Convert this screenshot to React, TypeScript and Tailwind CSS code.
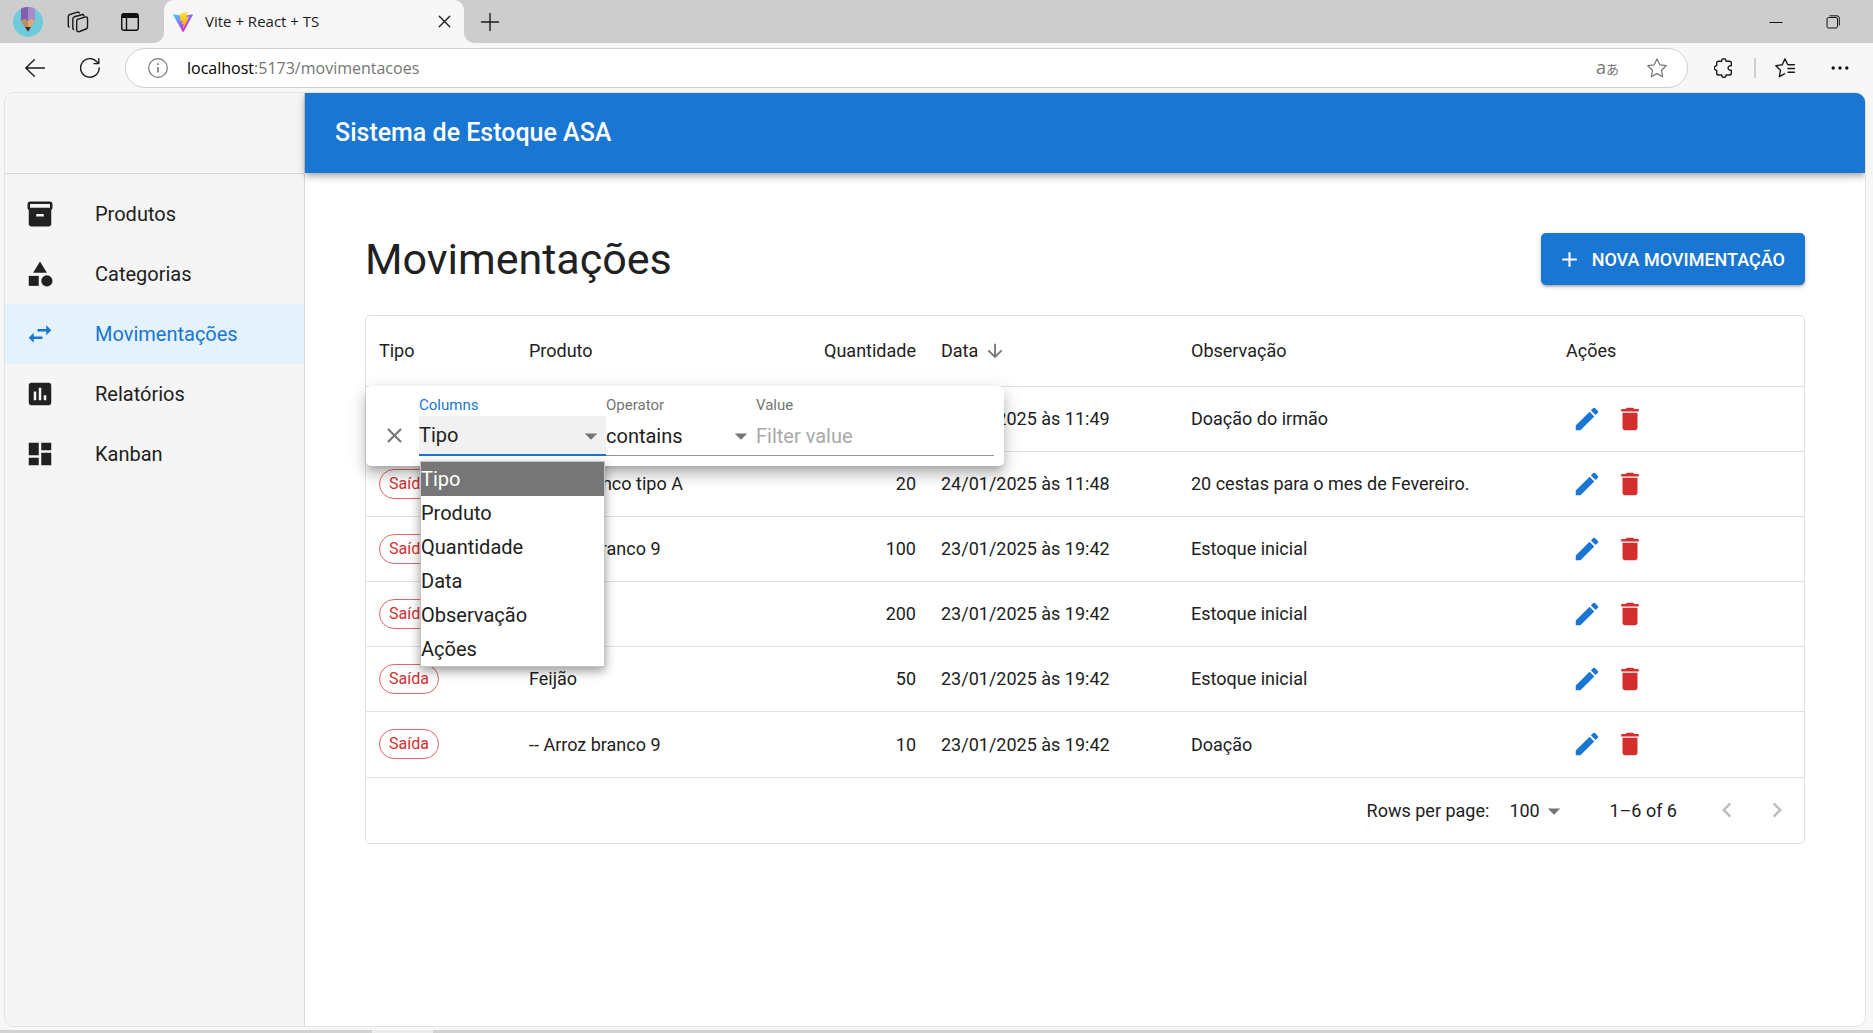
import React, { useState } from "react";
import {
  MdAdd,
  MdArrowDownward,
  MdArrowDropDown,
  MdAssessment,
  MdCategory,
  MdClose,
  MdDashboard,
  MdDelete,
  MdEdit,
  MdInventory2,
  MdKeyboardArrowLeft,
  MdKeyboardArrowRight,
  MdSwapHoriz,
} from "react-icons/md";

const navItems = [
  { label: "Produtos", Icon: MdInventory2 },
  { label: "Categorias", Icon: MdCategory },
  { label: "Movimentações", Icon: MdSwapHoriz, active: true },
  { label: "Relatórios", Icon: MdAssessment },
  { label: "Kanban", Icon: MdDashboard },
];

const columns = ["Tipo", "Produto", "Quantidade", "Data", "Observação", "Ações"];

const headerCellClasses = ["px-[13px]", "px-[13px]", "px-[13px] text-right", "px-3", "px-3", "px-3"];

const rows = [
  { produto: "Feijão", quantidade: 20, data: "24/01/2025 às 11:49", obs: "Doação do irmão" },
  { produto: "Arroz branco tipo A", quantidade: 20, data: "24/01/2025 às 11:48", obs: "20 cestas para o mes de Fevereiro." },
  { produto: "-- Arroz branco 9", quantidade: 100, data: "23/01/2025 às 19:42", obs: "Estoque inicial" },
  { produto: "Feijão", quantidade: 200, data: "23/01/2025 às 19:42", obs: "Estoque inicial" },
  { produto: "Feijão", quantidade: 50, data: "23/01/2025 às 19:42", obs: "Estoque inicial" },
  { produto: "-- Arroz branco 9", quantidade: 10, data: "23/01/2025 às 19:42", obs: "Doação" },
];

function ProfileIcon() {
  return (
    <svg width="30" height="30" viewBox="0 0 30 30" aria-hidden="true">
      <circle cx="15" cy="15" r="15" fill="#6fcbdb" />
      <path d="M8 1.7A15 15 0 0 1 22 1.7V15H8z" fill="#a78bc9" />
      <path d="M8 1.7A15 15 0 0 1 15 0V15H8z" fill="#7f5fae" />
      <path d="M8 14l3.5-2 3.5 2 3.5-2 3.5 2-4.500 7h-5z" fill="#dba878" />
      <path d="M8 14l3.500-2 3.500 2v7h-2.500z" fill="#c08a5c" />
      <path d="M12 20h6l-3 4.800z" fill="#333" />
    </svg>
  );
}

function WorkspacesIcon() {
  return (
    <svg width="24" height="24" viewBox="0 0 24 24" fill="none" stroke="#1b1b1b" strokeWidth="1.400" strokeLinejoin="round" strokeLinecap="round" aria-hidden="true">
      <path d="M11.500 9.300l7.500-2.300q2.500-.6 2.500 1.800v8.200q0 1.500-1.500 2l-6.500 2.500q-2.800.8-2.800-1.800v-8.500q0-1.400.8-1.900z" />
      <path d="M6.800 18.500V8.800q0-1.500 1.500-2L16.800 4.500M6.800 18.500q0 .8.800 1" />
      <path d="M2.300 16V6.500q0-1.500 1.500-2L11.500 2.200q1.500-.3 1.800.8M2.300 16q0 .8.800 1" />
      <path d="M16.800 4.500q.8.100 1 1" />
    </svg>
  );
}

function TabActionsIcon() {
  return (
    <svg width="20" height="20" viewBox="0 0 20 20" aria-hidden="true">
      <rect x="1.700" y="1.700" width="16.600" height="16.600" rx="2.600" fill="none" stroke="#111" strokeWidth="1.400" />
      <path d="M1.500 6V4q0-3 3-3h11q3 0 3 3v2z" fill="#111" />
      <path d="M6.500 6v12" stroke="#111" strokeWidth="1.400" />
    </svg>
  );
}

function ViteIcon() {
  return (
    <svg width="20" height="20" viewBox="0 0 256 257" aria-hidden="true">
      <defs>
        <linearGradient id="viteBody" x1="-.828%" x2="57.636%" y1="7.652%" y2="78.411%">
          <stop offset="0%" stopColor="#41D1FF" />
          <stop offset="100%" stopColor="#BD34FE" />
        </linearGradient>
        <linearGradient id="viteBolt" x1="43.376%" x2="50.316%" y1="2.242%" y2="89.030%">
          <stop offset="0%" stopColor="#FFEA83" />
          <stop offset="8.333%" stopColor="#FFDD35" />
          <stop offset="100%" stopColor="#FFA800" />
        </linearGradient>
      </defs>
      <path fill="url(#viteBody)" d="M255.153 37.938L134.897 252.976c-2.483 4.440-8.862 4.466-11.382.048L.875 37.958c-2.746-4.814 1.371-10.646 6.827-9.670l120.385 21.517a6.537 6.537 0 0 0 2.322-.004l117.867-21.483c5.438-.991 9.574 4.796 6.877 9.620Z" />
      <path fill="url(#viteBolt)" d="M185.432.063L96.440 17.501a3.268 3.268 0 0 0-2.634 3.014l-5.474 92.456a3.268 3.268 0 0 0 3.997 3.378l24.777-5.718c2.318-.535 4.413 1.507 3.936 3.838l-7.361 36.047c-.495 2.426 1.782 4.500 4.151 3.780l15.304-4.649c2.372-.720 4.652 1.360 4.150 3.788l-11.698 56.621c-.732 3.542 3.979 5.473 5.943 2.437l1.313-2.028l72.516-144.720c1.215-2.423-.880-5.186-3.540-4.672l-25.505 4.922c-2.396.462-4.435-1.770-3.759-4.114l16.646-57.705c.677-2.350-1.370-4.583-3.769-4.113Z" />
    </svg>
  );
}

function LineIcon({ d, size = 20, color = "#1b1b1b", width = 1.4 }: { d: string; size?: number; color?: string; width?: number }) {
  return (
    <svg width={size} height={size} viewBox="0 0 20 20" fill="none" stroke={color} strokeWidth={width} strokeLinecap="round" strokeLinejoin="round" aria-hidden="true">
      <path d={d} />
    </svg>
  );
}

const ICONS = {
  back: "M19.500 10H.8M9.300 1.800L.8 10l8.500 8.200",
  refresh: "M19.200 10A9.300 9.300 0 1 1 16.800 3.700L18.500 5.400M18.800.8v4.800H14",
  close: "M4.500 4.500l11 11M15.500 4.500l-11 11",
  plus: "M10 1.500v17M1.500 10h17",
  star: "M10 .9l2.800 5.900 6.400.9-4.700 4.500 1.200 6.500L10 15.600l-5.700 3.100 1.200-6.500L.8 7.700l6.400-.9z",
  favorites: "M12.800 6.800L10 .9 7.200 6.800l-6.400.9 4.700 4.500-1.200 6.500 5.200-2.900M12.800 6.800h6.700M13 10.500h6.500M13 14.200h6.500",
  puzzle: "M4.500 3.200h3.200c-.3-3.300 4.500-3.300 4.300 0h3.500q1.800 0 1.800 1.800v2.700c-4.300-.4-4.300 5 0 4.600v2.900q0 1.800-1.800 1.800H12c.2 3.300-4.600 3.300-4.300 0H4.500q-1.800 0-1.800-1.800v-2.900c-3.100.2-3.100-4.800 0-4.600V5q0-1.800 1.800-1.800z",
};

function IconButton({ label, className, children }: { label: string; className: string; children: React.ReactNode }) {
  return (
    <button type="button" aria-label={label} className={`flex shrink-0 items-center justify-center ${className}`}>
      {children}
    </button>
  );
}

function TabStrip() {
  return (
    <div className="flex h-[43px] shrink-0">
      <div className="flex items-center rounded-br-[10px] bg-[#cdcdcd] pl-[13px]">
        <IconButton label="Perfil" className="size-[30px]"><ProfileIcon /></IconButton>
        <IconButton label="Workspaces" className="ml-5 size-[30px]"><WorkspacesIcon /></IconButton>
        <IconButton label="Ações da guia" className="mr-[19px] ml-[22px] size-[30px]"><TabActionsIcon /></IconButton>
      </div>
      <div className="w-[300px] shrink-0 bg-[#cdcdcd]">
        <div className="flex h-full items-center rounded-t-[10px] bg-[#f7f7f7] pr-2.5 pl-[9px]">
          <ViteIcon />
          <span className="ml-3 flex-1 font-['Open_Sans',sans-serif] text-[15px] text-[#1b1b1b]">Vite + React + TS</span>
          <IconButton label="Fechar guia" className="size-5"><LineIcon d={ICONS.close} size={19} /></IconButton>
        </div>
      </div>
      <div className="flex flex-1 items-center rounded-bl-[10px] bg-[#cdcdcd] pr-6 pl-4">
        <IconButton label="Nova guia" className="size-5"><LineIcon d={ICONS.plus} /></IconButton>
        <IconButton label="Minimizar" className="ml-auto size-8">
          <svg width="14" height="14" viewBox="0 0 14 14" stroke="#111" aria-hidden="true"><path d="M.5 7.500h13" /></svg>
        </IconButton>
        <IconButton label="Restaurar" className="ml-[25px] size-8">
          <svg width="14" height="14" viewBox="0 0 14 14" fill="none" stroke="#111" aria-hidden="true">
            <rect x="1" y="2.500" width="10.500" height="10.500" rx="1.500" />
            <path d="M3.500.8h7.500q2.300 0 2.300 2.300v7.400" />
          </svg>
        </IconButton>
      </div>
    </div>
  );
}

function AddressBar() {
  return (
    <div className="flex h-[49px] shrink-0 items-center pr-[23px] pl-5">
      <IconButton label="Voltar" className="size-[30px]"><LineIcon d={ICONS.back} /></IconButton>
      <IconButton label="Atualizar" className="ml-[25px] size-[30px]"><LineIcon d={ICONS.refresh} /></IconButton>
      <div className="ml-5 flex h-10 flex-1 items-center rounded-full border border-[#cfcfcf] bg-white pr-5 pl-[22px] font-['Open_Sans',sans-serif]">
        <svg width="20" height="20" viewBox="0 0 20 20" fill="none" stroke="#767676" aria-hidden="true">
          <circle cx="10" cy="10" r="9.300" strokeWidth="1.200" />
          <path d="M10 9v5.500M10 5.300v1.700" strokeWidth="1.600" />
        </svg>
        <a href="#url" className="ml-[19px] flex-1 text-[16px] text-[#767676]">
          <span className="text-black">localhost</span>:5173/movimentacoes
        </a>
        <button type="button" aria-label="Traduzir" className="font-['Open_Sans','Noto_Sans_CJK_JP',sans-serif] leading-5 text-[#767676]">
          <span className="text-[18px]">a</span><span className="text-[13px]">あ</span>
        </button>
        <IconButton label="Favoritar" className="ml-[28px] size-5"><LineIcon d={ICONS.star} color="#767676" width={1.2} /></IconButton>
      </div>
      <IconButton label="Extensões" className="ml-[26px] size-5"><LineIcon d={ICONS.puzzle} /></IconButton>
      <span className="ml-5 h-5 w-0.5 bg-[#cfcfcf]" />
      <IconButton label="Favoritos" className="ml-[19px] size-5"><LineIcon d={ICONS.favorites} /></IconButton>
      <IconButton label="Configurações" className="ml-[35px] size-5">
        <svg width="18" height="18" viewBox="0 0 18 18" fill="#111" aria-hidden="true">
          <circle cx="2.200" cy="9" r="1.700" /><circle cx="9" cy="9" r="1.700" /><circle cx="15.800" cy="9" r="1.700" />
        </svg>
      </IconButton>
    </div>
  );
}

function Sidebar() {
  return (
    <aside className="w-[300px] shrink-0 border-r border-[#d8d8d8] bg-[#f5f5f5]">
      <div className="h-[81px] border-b border-[#d8d8d8]" />
      <nav className="flex flex-col pt-2.5">
        {navItems.map(({ label, Icon, active }) => (
          <a
            key={label}
            href="#nav"
            className={`flex h-[60px] items-center gap-10 pl-5 text-[20px] leading-8 ${active ? "bg-[#e3f2fd] text-[#1976d2]" : "text-[#212121]"}`}
          >
            <Icon size={30} />
            {label}
          </a>
        ))}
      </nav>
    </aside>
  );
}

function FilterPanel() {
  const [column, setColumn] = useState("Tipo");
  return (
    <div className="absolute top-[70px] left-0 flex h-20 w-[638px] items-end rounded-[5px] bg-white pr-2.5 pb-2.5 pl-[13px] shadow-[0_6px_6px_-4px_rgba(0,0,0,0.2),0_10px_12px_1px_rgba(0,0,0,0.14),0_4px_18px_2px_rgba(0,0,0,0.12)]">
      <button type="button" aria-label="Remover filtro" className="mb-1.5 mr-[10px] flex size-[30px] items-center justify-center text-[#757575]">
        <MdClose size={25} className="shrink-0" />
      </button>
      <div className="relative w-[187px]">
        <label htmlFor="filter-column" className="block pb-px text-[15px] leading-5 text-[#1976d2]">Columns</label>
        <div className="relative">
          <select
            id="filter-column"
            value={column}
            onChange={(e) => setColumn(e.target.value)}
            className="h-10 w-full appearance-none border-b-2 border-[#1976d2] bg-[#f1f1f1] text-[20px] text-[#212121] outline-none"
          >
            {columns.map((c) => <option key={c}>{c}</option>)}
          </select>
          <MdArrowDropDown size={30} className="pointer-events-none absolute top-[5px] right-0 text-[#757575]" />
        </div>
        <ul role="listbox" aria-label="Columns" className="absolute top-[66px] left-px z-10 w-[185px] border border-[#c4c4c4] bg-white text-[20px] leading-[34px] text-[#212121] shadow-[0_4px_10px_rgba(0,0,0,0.4)]">
          {columns.map((c) => (
            <li key={c} role="option" aria-selected={c === column} className={`h-[34px] ${c === column ? "bg-[#767676] text-white" : ""}`}>{c}</li>
          ))}
        </ul>
      </div>
      <div className="w-[150px]">
        <label htmlFor="filter-operator" className="block pb-px text-[15px] leading-5 text-[#757575]">Operator</label>
        <div className="relative">
          <select id="filter-operator" className="h-10 w-full appearance-none border-b border-[#949494] bg-transparent text-[20px] text-[#212121] outline-none">
            <option>contains</option>
          </select>
          <MdArrowDropDown size={30} className="pointer-events-none absolute top-[5px] right-0 text-[#757575]" />
        </div>
      </div>
      <div className="flex-1">
        <label htmlFor="filter-value" className="block pb-px text-[15px] leading-5 text-[#757575]">Value</label>
        <input id="filter-value" placeholder="Filter value" className="block h-10 w-full border-b border-[#949494] text-[20px] outline-none placeholder:text-[#a9a9a9]" />
      </div>
    </div>
  );
}

function MovementsGrid() {
  return (
    <div className="relative mt-[30px] rounded-[5px] border border-[#e0e0e0]">
      <table className="w-full table-fixed border-collapse text-left text-[18px] text-[#212121]">
        <colgroup>
          <col className="w-[150px]" />
          <col />
          <col className="w-[125px]" />
          <col className="w-[250px]" />
          <col className="w-[375px]" />
          <col className="w-[250px]" />
        </colgroup>
        <thead>
          <tr className="h-[70px] border-b border-[#e0e0e0]">
            {columns.map((c, i) => (
              <th key={c} scope="col" className={`font-normal ${headerCellClasses[i]}`}>
                {c === "Data" ? (
                  <span className="flex items-center gap-1.5">
                    Data
                    <MdArrowDownward size={22} className="text-[#757575]" />
                  </span>
                ) : c}
              </th>
            ))}
          </tr>
        </thead>
        <tbody>
          {rows.map((r, i) => (
            <tr key={i} className="h-[65px] border-b border-[#e0e0e0] last:h-[66px]">
              <td className="px-[13px]">
                <span className="inline-flex h-[30px] items-center rounded-full border border-[#e06666] px-[9px] align-middle text-[16px] text-[#d32f2f]">Saída</span>
              </td>
              <td className="px-[13px] whitespace-nowrap">{r.produto}</td>
              <td className="px-[13px] text-right">{r.quantidade}</td>
              <td className="px-3 whitespace-nowrap">{r.data}</td>
              <td className="px-3 whitespace-nowrap">{r.obs}</td>
              <td className="px-3">
                <div className="flex gap-px">
                  <button type="button" aria-label="Editar" className="p-1.5 text-[#1976d2]"><MdEdit size={30} /></button>
                  <button type="button" aria-label="Excluir" className="p-1.5 text-[#d32f2f]"><MdDelete size={30} /></button>
                </div>
              </td>
            </tr>
          ))}
        </tbody>
      </table>
      <div className="flex h-[65px] items-center justify-end pr-3 text-[18px] text-[#212121]">
        <label htmlFor="rows-per-page">Rows per page:</label>
        <div className="relative ml-5">
          <select id="rows-per-page" className="w-[60px] appearance-none outline-none">
            <option>100</option>
          </select>
          <MdArrowDropDown size={30} className="pointer-events-none absolute -top-px right-0 text-[#757575]" />
        </div>
        <span className="ml-10">1–6 of 6</span>
        <button type="button" disabled aria-label="Página anterior" className="ml-[35px] text-[#bdbdbd]"><MdKeyboardArrowLeft size={30} /></button>
        <button type="button" disabled aria-label="Próxima página" className="ml-5 text-[#bdbdbd]"><MdKeyboardArrowRight size={30} /></button>
      </div>
      <FilterPanel />
    </div>
  );
}

export default function App() {
  return (
    <div className="flex min-h-screen flex-col bg-[#f7f7f7] font-['Roboto',sans-serif]">
      <TabStrip />
      <AddressBar />
      <div className="mr-[7px] mb-[3px] ml-1 flex flex-1 overflow-hidden rounded-[10px] border border-[#e2e2e2] bg-white">
        <Sidebar />
        <div className="min-w-0 flex-1">
          <header className="flex h-20 items-center bg-[#1976d2] px-[30px] text-[25px] leading-10 font-medium text-white shadow-[0_2px_5px_-1px_rgba(0,0,0,0.2),0_5px_6px_rgba(0,0,0,0.14),0_1px_12px_rgba(0,0,0,0.12)]">
            Sistema de Estoque ASA
          </header>
          <main className="px-[60px] pt-[60px]">
            <div className="flex h-[52px] items-center justify-between">
              <h1 className="text-[43px] leading-[52px] text-[#212121]">Movimentações</h1>
              <button type="button" className="flex h-full items-center gap-2.5 rounded-[5px] bg-[#1976d2] pr-5 pl-4 text-[18px] font-medium text-white shadow-[0_3px_2px_-2px_rgba(0,0,0,0.2),0_2px_3px_rgba(0,0,0,0.14),0_1px_6px_rgba(0,0,0,0.12)]">
                <MdAdd size={25} />
                NOVA MOVIMENTAÇÃO
              </button>
            </div>
            <MovementsGrid />
          </main>
        </div>
      </div>
      <div className="flex h-[3px] bg-[#d2d2d2] pl-[372px]">
        <span className="w-[61px] bg-[#ececec]" />
      </div>
    </div>
  );
}
